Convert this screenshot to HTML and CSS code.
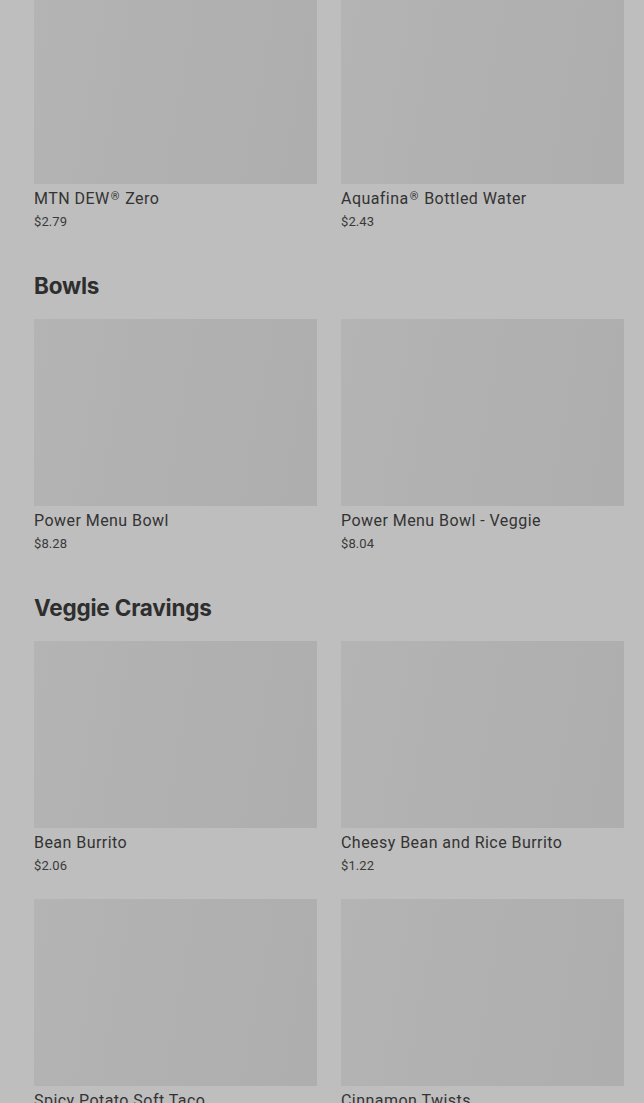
FILE: index.html
```html
<!DOCTYPE html>
<html lang="en">
<head>
  <meta charset="UTF-8">
  <title>Menu</title>
  <link rel="stylesheet" href="styles.css">
</head>
<body>

<div class="menu">
  <section class="category">
    <div class="grid">
      <div class="item">
        <div class="photo"></div>
        <div class="name">MTN DEW<span class="reg">®</span> Zero</div>
        <div class="price">$2.79</div>
      </div>
      <div class="item">
        <div class="photo"></div>
        <div class="name">Aquafina<span class="reg">®</span> Bottled Water</div>
        <div class="price">$2.43</div>
      </div>
    </div>
  </section>

  <section class="category">
    <h2>Bowls</h2>
    <div class="grid">
      <div class="item">
        <div class="photo"></div>
        <div class="name">Power Menu Bowl</div>
        <div class="price">$8.28</div>
      </div>
      <div class="item">
        <div class="photo"></div>
        <div class="name">Power Menu Bowl - Veggie</div>
        <div class="price">$8.04</div>
      </div>
    </div>
  </section>

  <section class="category">
    <h2>Veggie Cravings</h2>
    <div class="grid">
      <div class="item">
        <div class="photo"></div>
        <div class="name">Bean Burrito</div>
        <div class="price">$2.06</div>
      </div>
      <div class="item">
        <div class="photo"></div>
        <div class="name">Cheesy Bean and Rice Burrito</div>
        <div class="price">$1.22</div>
      </div>
      <div class="item">
        <div class="photo"></div>
        <div class="name">Spicy Potato Soft Taco</div>
        <div class="price">$1.92</div>
      </div>
      <div class="item">
        <div class="photo"></div>
        <div class="name">Cinnamon Twists</div>
        <div class="price">$1.49</div>
      </div>
    </div>
  </section>
</div>

</body>
</html>
```

FILE: styles.css
```css
body {
  margin: 0;
  background: #bebebe;
  font-family: Roboto, "Liberation Sans", sans-serif;
  color: #2f2f2f;
  overflow: hidden;
}

.menu {
  margin-top: -3px;
  padding: 0 20px 0 34px;
}

.category h2 {
  margin: 40px 0 18px;
  font-family: Inter, "Liberation Sans", sans-serif;
  font-size: 22.5px;
  font-weight: 700;
  line-height: 30px;
  letter-spacing: -0.2px;
  color: #2e2e2e;
}

.grid {
  display: grid;
  grid-template-columns: 1fr 1fr;
  column-gap: 24px;
  row-gap: 24px;
}

.item {
  height: 234px;
}

.photo {
  height: 187px;
  background: linear-gradient(100deg, #b4b4b4 0%, #b1b1b1 40%, #aeaeae 100%);
}

.name {
  margin-top: 4px;
  font-size: 16px;
  line-height: 22px;
  letter-spacing: 0.45px;
  color: #333;
}

.name .reg {
  font-size: 11px;
  vertical-align: 4px;
  line-height: 0;
  margin: 0 1px 0 1px;
}

.price {
  margin-top: 2px;
  font-size: 13px;
  line-height: 20px;
  letter-spacing: 0.1px;
  color: #3a3a3a;
}
```
